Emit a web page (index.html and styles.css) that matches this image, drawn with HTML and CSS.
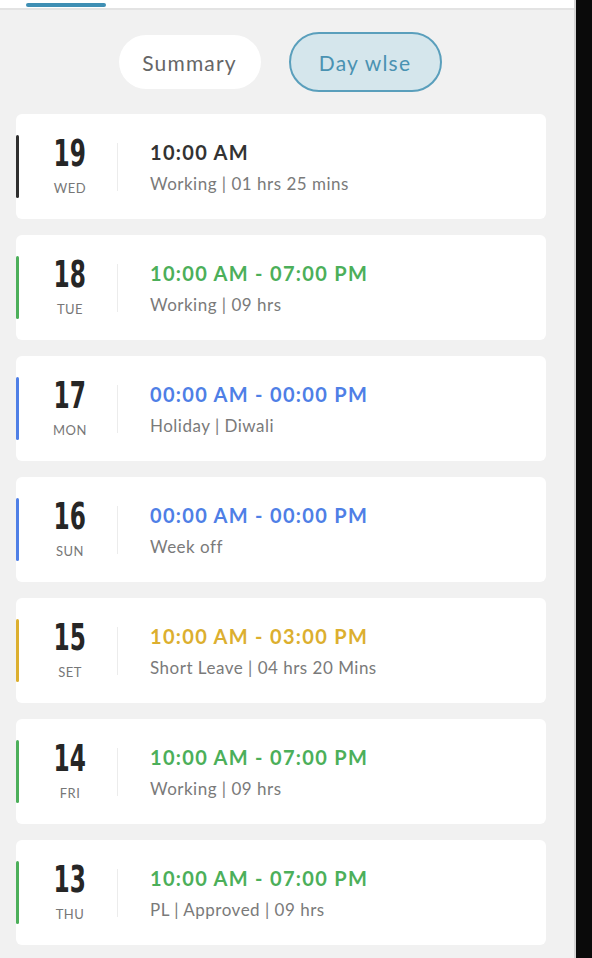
FILE: index.html
```html
<!DOCTYPE html>
<html>
<head>
<meta charset="utf-8">
<link rel="stylesheet" href="styles.css">
</head>
<body>
<div class="frame">
  <div class="screen">
    <div class="topbar"><span class="tab-indicator"></span></div>
    <div class="toggle">
      <button class="pill pill-summary">Summary</button>
      <button class="pill pill-active">Day wlse</button>
    </div>
    <div class="list">
      <div class="card">
        <span class="bar c-dark"></span>
        <div class="date"><div class="num">19</div><div class="dow">WED</div></div>
        <span class="divider"></span>
        <div class="info"><div class="time t-dark">10:00 AM</div><div class="sub">Working | 01 hrs 25 mins</div></div>
      </div>
      <div class="card">
        <span class="bar c-green"></span>
        <div class="date"><div class="num">18</div><div class="dow">TUE</div></div>
        <span class="divider"></span>
        <div class="info"><div class="time t-green">10:00 AM - 07:00 PM</div><div class="sub">Working | 09 hrs</div></div>
      </div>
      <div class="card">
        <span class="bar c-blue"></span>
        <div class="date"><div class="num">17</div><div class="dow">MON</div></div>
        <span class="divider"></span>
        <div class="info"><div class="time t-blue">00:00 AM - 00:00 PM</div><div class="sub">Holiday | Diwali</div></div>
      </div>
      <div class="card">
        <span class="bar c-blue"></span>
        <div class="date"><div class="num">16</div><div class="dow">SUN</div></div>
        <span class="divider"></span>
        <div class="info"><div class="time t-blue">00:00 AM - 00:00 PM</div><div class="sub">Week off</div></div>
      </div>
      <div class="card">
        <span class="bar c-yellow"></span>
        <div class="date"><div class="num">15</div><div class="dow">SET</div></div>
        <span class="divider"></span>
        <div class="info"><div class="time t-yellow">10:00 AM - 03:00 PM</div><div class="sub">Short Leave | 04 hrs 20 Mins</div></div>
      </div>
      <div class="card">
        <span class="bar c-green"></span>
        <div class="date"><div class="num">14</div><div class="dow">FRI</div></div>
        <span class="divider"></span>
        <div class="info"><div class="time t-green">10:00 AM - 07:00 PM</div><div class="sub">Working | 09 hrs</div></div>
      </div>
      <div class="card">
        <span class="bar c-green"></span>
        <div class="date"><div class="num">13</div><div class="dow">THU</div></div>
        <span class="divider"></span>
        <div class="info"><div class="time t-green">10:00 AM - 07:00 PM</div><div class="sub">PL | Approved | 09 hrs</div></div>
      </div>
    </div>
  </div>
  <div class="edge"></div>
</div>
</body>
</html>
```
FILE: styles.css
```css
* { box-sizing: border-box; }
html, body { margin: 0; padding: 0; }
body {
  width: 592px;
  height: 958px;
  overflow: hidden;
  background: #f1f1f1;
  font-family: Lato, "Open Sans", sans-serif;
}
.frame {
  display: flex;
  height: 958px;
}
.screen {
  width: 576px;
  background: #f1f1f1;
  border-right: 2px solid #d4d4d4;
}
.edge {
  flex: 1;
  background: #0a0a0a;
}
.topbar {
  height: 10px;
  background: #fff;
  border-bottom: 2px solid #e3e3e3;
  padding-left: 26px;
  padding-top: 3px;
}
.tab-indicator {
  display: block;
  width: 80px;
  height: 4px;
  border-radius: 2px;
  background: #3f8fb4;
}
.toggle {
  display: flex;
  justify-content: center;
  align-items: center;
  gap: 28px;
  padding: 22px 14px 0 0;
  height: 82px;
}
.pill {
  font-family: Lato, "Open Sans", sans-serif;
  font-size: 21px;
  letter-spacing: 1.2px;
  border-radius: 30px;
  cursor: pointer;
  padding: 0;
}
.pill-summary {
  width: 142px;
  height: 54px;
  background: #fff;
  border: none;
  color: #666;
}
.pill-active {
  width: 153px;
  height: 60px;
  background: #d5e6ec;
  border: 2px solid #5a9fbc;
  color: #4a92b2;
}
.list {
  display: flex;
  flex-direction: column;
  gap: 16px;
  padding: 22px 0 0 16px;
}
.card {
  width: 530px;
  height: 105px;
  background: #fff;
  border-radius: 6px;
  display: flex;
  align-items: center;
}
.bar {
  width: 3px;
  height: 63px;
  border-radius: 2px;
}
.c-dark { background: #2e2e2e; }
.c-green { background: #4caf5a; }
.c-blue { background: #4f7fe6; }
.c-yellow { background: #dcaf2f; }
.date {
  width: 98px;
  padding-left: 4px;
  display: flex;
  flex-direction: column;
  align-items: center;
}
.num {
  font-family: "DejaVu Sans Condensed", "Liberation Sans Narrow", sans-serif;
  font-weight: bold;
  font-size: 38px;
  line-height: 40px;
  margin-top: -4px;
  color: #262626;
  transform: scaleX(0.68);
}
.dow {
  font-family: Lato, sans-serif;
  font-size: 13px;
  letter-spacing: 0.5px;
  color: #777;
  margin-top: 7px;
}
.divider {
  width: 1px;
  height: 48px;
  background: #ececec;
}
.info {
  margin-left: 32px;
  display: flex;
  flex-direction: column;
}
.time {
  font-size: 20px;
  font-weight: bold;
  line-height: 24px;
  letter-spacing: 1.3px;
}
.t-dark { color: #333; }
.t-green { color: #4caf5a; }
.t-blue { color: #4f7fe6; }
.t-yellow { color: #dcaf2f; }
.sub {
  margin-top: 10px;
  font-size: 17px;
  line-height: 20px;
  letter-spacing: 0.5px;
  color: #7a7a7a;
}
```
